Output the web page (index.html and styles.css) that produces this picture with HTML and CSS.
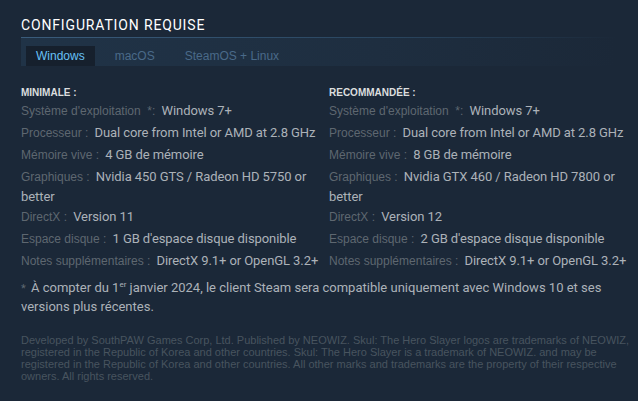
FILE: index.html
```html
<!DOCTYPE html>
<html lang="fr">
<head>
<meta charset="utf-8">
<title>Configuration requise</title>
<link rel="stylesheet" href="styles.css">
</head>
<body>
<div class="sysreq">
  <h2 class="title">Configuration requise</h2>
  <div class="tabs">
    <div class="tab active">Windows</div>
    <div class="tab">macOS</div>
    <div class="tab">SteamOS + Linux</div>
  </div>
  <div class="cols">
    <div class="col">
      <div class="head">MINIMALE :</div>
      <ul class="reqs">
        <li><span class="lbl">Système d'exploitation&nbsp; *:</span> Windows 7+</li>
        <li><span class="lbl">Processeur :</span> Dual core from Intel or AMD at 2.8 GHz</li>
        <li><span class="lbl">Mémoire vive :</span> 4 GB de mémoire</li>
        <li class="wrap"><span class="lbl">Graphiques :</span> Nvidia 450 GTS / Radeon HD 5750 or better</li>
        <li><span class="lbl">DirectX :</span> Version 11</li>
        <li><span class="lbl">Espace disque :</span> 1 GB d'espace disque disponible</li>
        <li><span class="lbl">Notes supplémentaires :</span> DirectX 9.1+ or OpenGL 3.2+</li>
      </ul>
    </div>
    <div class="col">
      <div class="head">RECOMMANDÉE :</div>
      <ul class="reqs">
        <li><span class="lbl">Système d'exploitation&nbsp; *:</span> Windows 7+</li>
        <li><span class="lbl">Processeur :</span> Dual core from Intel or AMD at 2.8 GHz</li>
        <li><span class="lbl">Mémoire vive :</span> 8 GB de mémoire</li>
        <li class="wrap"><span class="lbl">Graphiques :</span> Nvidia GTX 460 / Radeon HD 7800 or better</li>
        <li><span class="lbl">DirectX :</span> Version 12</li>
        <li><span class="lbl">Espace disque :</span> 2 GB d'espace disque disponible</li>
        <li><span class="lbl">Notes supplémentaires :</span> DirectX 9.1+ or OpenGL 3.2+</li>
      </ul>
    </div>
  </div>
  <p class="note"><span class="star">*</span> À compter du 1<sup>er</sup> janvier 2024, le client Steam sera compatible uniquement avec Windows 10 et ses versions plus récentes.</p>
  <p class="legal">Developed by SouthPAW Games Corp, Ltd. Published by NEOWIZ. Skul: The Hero Slayer logos are trademarks of NEOWIZ, registered in the Republic of Korea and other countries. Skul: The Hero Slayer is a trademark of NEOWIZ. and may be registered in the Republic of Korea and other countries. All other marks and trademarks are the property of their respective owners. All rights reserved.</p>
</div>
</body>
</html>
```
FILE: styles.css
```css
html, body {
  margin: 0;
  padding: 0;
  background: #1b2838;
}
.sysreq {
  padding: 15px 21px 0 21px;
}
.title {
  margin: 0;
  padding-bottom: 2px;
  font-family: Roboto, "Noto Sans", sans-serif;
  font-size: 14px;
  font-weight: 400;
  line-height: 20px;
  letter-spacing: 0.85px;
  text-transform: uppercase;
  color: #ffffff;
}
.tabs {
  display: flex;
  gap: 10px;
  height: 20px;
  padding: 8px 0 0 5px;
  border-top: 1px solid transparent;
  border-image: linear-gradient(to right, #3a5c7c 0%, #2a4660 60%, rgba(27,40,56,0) 100%) 1;
  background: linear-gradient(to right, #203347 0%, #1e2e40 60%, #1b2838 100%);
}
.tab {
  padding: 0 10px;
  font-family: "Liberation Sans", Arial, sans-serif;
  font-size: 12px;
  line-height: 20px;
  color: #4a6a89;
}
.tab.active {
  background: #16202d;
  color: #67c1f5;
}
.cols {
  display: grid;
  grid-template-columns: 308px 300px;
  margin-top: 20px;
}
.head {
  font-family: "Liberation Sans", Arial, sans-serif;
  font-size: 10px;
  font-weight: 700;
  line-height: 14px;
  color: #dcdedf;
}
.reqs {
  list-style: none;
  margin: 1px 0 0 0;
  padding: 0;
}
.reqs li {
  margin-bottom: 2px;
  font-family: Roboto, "Noto Sans", sans-serif;
  font-size: 13px;
  line-height: 20px;
  letter-spacing: -0.08px;
  color: #acb2b8;
}
.reqs li.wrap {
  margin-bottom: 0;
}
.lbl {
  font-family: "Liberation Sans", Arial, sans-serif;
  font-size: 12px;
  letter-spacing: 0;
  color: #5e6770;
  margin-right: 3px;
}
.note {
  margin: 6px 0 0 0;
  font-family: Roboto, "Noto Sans", sans-serif;
  font-size: 13px;
  line-height: 18px;
  color: #acb2b8;
}
.note sup {
  font-size: 8px;
  line-height: 0;
  vertical-align: 5px;
}
.star {
  color: #5e6770;
  font-size: 11px;
  margin-right: 2px;
}
.legal {
  margin: 18px -20px 0 0;
  font-family: "Liberation Sans", Arial, sans-serif;
  font-size: 11px;
  line-height: 12px;
  color: #48545f;
}
```
